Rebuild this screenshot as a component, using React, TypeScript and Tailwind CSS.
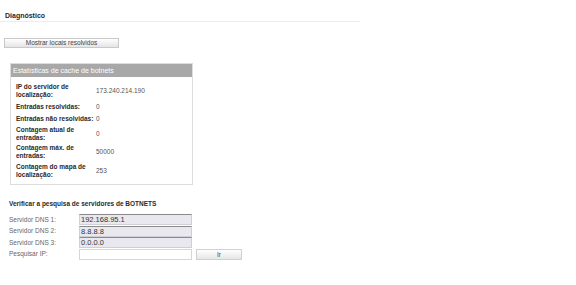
import React from "react";

const stats: { label: string[]; value: string; tall: boolean }[] = [
  { label: ["IP do servidor de", "localização:"], value: "173.240.214.190", tall: true },
  { label: ["Entradas resolvidas:"], value: "0", tall: false },
  { label: ["Entradas não resolvidas:"], value: "0", tall: false },
  { label: ["Contagem atual de", "entradas:"], value: "0", tall: true },
  { label: ["Contagem máx. de", "entradas:"], value: "50000", tall: true },
  { label: ["Contagem do mapa de", "localização:"], value: "253", tall: true },
];

const dns = [
  { label: "Servidor DNS 1:", value: "192.168.95.1" },
  { label: "Servidor DNS 2:", value: "8.8.8.8" },
  { label: "Servidor DNS 3:", value: "0.0.0.0" },
];

export default function App() {
  return (
    <div className="w-[576px] h-[285px] bg-white font-['Liberation_Sans',Arial,sans-serif] overflow-hidden">
      {/* title */}
      <div className="w-[360px] pt-[12px] pl-[5px] pb-[1px] border-b border-[#ececec] text-[7px] leading-[8px] font-bold text-[#1e2838]">
        Diagnóstico
      </div>

      <button className="block mt-[16px] ml-[4px] w-[115px] h-[10px] border border-[#c9c9c9] bg-gradient-to-b from-white to-[#e4e4e4] text-[6.5px] leading-[8px] text-[#444]">
        Mostrar locais resolvidos
      </button>

      {/* botnet cache stats */}
      <div className="mt-[15px] ml-[10px] w-[183px] h-[122px] border border-[#dcdcdc]">
        <div className="h-[13px] bg-[#a8a8a8] pl-[2px] text-[7px] leading-[13px] text-white">
          Estatísticas de cache de botnets
        </div>
        <div className="pt-[5px] pl-[5px]">
          {stats.map((s) => (
            <div
              key={s.value + s.label[0]}
              className={`flex items-center ${s.tall ? "h-[18.5px]" : "h-[12px]"}`}
            >
              <div className="w-[80px] text-[6.5px] leading-[8px] font-bold text-[#2a2a2a]">
                {s.label.map((l) => (
                  <div key={l}>{l}</div>
                ))}
              </div>
              <div className="text-[6.5px] leading-[8px] text-[#555]">{s.value}</div>
            </div>
          ))}
        </div>
      </div>

      {/* dns check */}
      <div className="mt-[15px] ml-[9px] text-[6.5px] leading-[8px] font-bold text-[#2a2a2a]">
        Verificar a pesquisa de servidores de BOTNETS
      </div>
      <div className="mt-[6px] ml-[9px] flex flex-col gap-[0.67px]">
        {dns.map((d) => (
          <div key={d.label} className="flex items-center h-[11px]">
            <div className="w-[70px] text-[6.5px] leading-[8px] text-[#666]">{d.label}</div>
            <div className="w-[113px] h-[11px] bg-[#e8e8ee] border border-[#cfcfd6] border-t-[#8a8a8a] pl-[1px] text-[7.5px] leading-[9px] text-[#333]">
              {d.value}
            </div>
          </div>
        ))}
        <div className="flex items-center h-[11px]">
          <div className="w-[70px] text-[6.5px] leading-[8px] text-[#666]">Pesquisar IP:</div>
          <div className="w-[113px] h-[11px] bg-white border border-[#d6d6d6]" />
          <button className="ml-[4px] w-[46px] h-[11px] border border-[#d0d0d0] bg-gradient-to-b from-white to-[#e6e6e6] text-[6.5px] leading-[9px] text-[#444]">
            Ir
          </button>
        </div>
      </div>
    </div>
  );
}
